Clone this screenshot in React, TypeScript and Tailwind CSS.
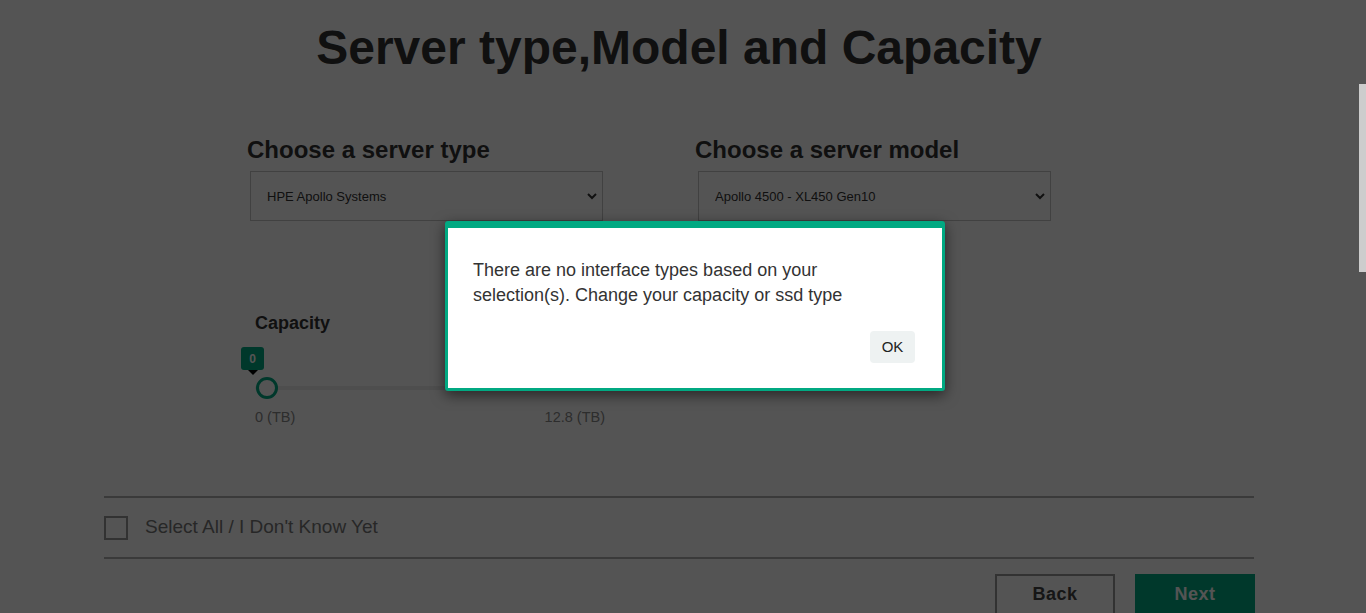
import React from 'react';

function SelectBox({ value }: { value: string }) {
    return (
        <div className="relative ml-[3px] mt-[8px] h-[50px] w-[353px]">
            <select
                defaultValue={value}
                className="h-full w-full appearance-none border border-[#c4c4c4] bg-white pl-[16px] pt-[2px] text-[13px] text-[#333] outline-none"
            >
                <option>{value}</option>
            </select>
            <svg
                className="pointer-events-none absolute right-[6px] top-[22px]"
                width="10"
                height="7"
                viewBox="0 0 10 7"
                fill="none"
            >
                <polyline points="1,1 5,5 9,1" stroke="#333" strokeWidth="2" />
            </svg>
        </div>
    );
}

function CapacitySlider() {
    return (
        <div className="pl-[8px]">
            <div className="text-[18px] font-bold leading-[21px] text-[#333]">Capacity</div>
            <div className="relative mt-[13px] h-[53px] w-[350px]">
                {/* track */}
                <div className="absolute left-0 right-0 top-[39px] h-[4px] rounded-full bg-[#ebebeb]" />
                {/* value tooltip */}
                <div className="absolute left-[-14px] top-0 flex h-[23px] w-[23px] items-center justify-center rounded-[3px] bg-[#01a982] text-[12px] font-bold text-white">
                    0
                </div>
                <div className="absolute left-[-7px] top-[23px] h-0 w-0 border-x-[5px] border-t-[5px] border-x-transparent border-t-black" />
                {/* thumb */}
                <div className="absolute left-[1px] top-[30px] h-[22px] w-[22px] rounded-full border-[3px] border-[#01a982] bg-white" />
            </div>
            <div className="mt-[9px] flex h-[16px] w-[350px] justify-between text-[14.5px] leading-[16px] text-[#888]">
                <span>0 (TB)</span>
                <span>12.8 (TB)</span>
            </div>
        </div>
    );
}

export default function App() {
    return (
        <div className="relative h-[613px] w-[1366px] overflow-hidden bg-white font-['Liberation_Sans',Arial,sans-serif]">
            <div className="w-[1358px]">
                <h1 className="pt-[20px] text-center text-[48px] font-bold leading-[56px] text-[#333]">
                    Server type,Model and Capacity
                </h1>

                <div className="mx-auto w-[1150px]">
                    <div className="mt-[60px] flex pl-[143px]">
                        <div className="w-[448px]">
                            <h2 className="text-[24px] font-bold leading-[27px] text-[#333]">Choose a server type</h2>
                            <SelectBox value="HPE Apollo Systems" />
                        </div>
                        <div className="w-[448px]">
                            <h2 className="text-[24px] font-bold leading-[27px] text-[#333]">Choose a server model</h2>
                            <SelectBox value="Apollo 4500 - XL450 Gen10" />
                        </div>
                    </div>

                    <div className="mt-[92px] pl-[143px]">
                        <CapacitySlider />
                    </div>

                    <div className="mt-[71px] h-[2px] bg-[#b0b0b0]" />
                    <div className="flex h-[59px] items-center gap-[17px]">
                        <div className="h-[24px] w-[24px] border-2 border-[#999]" />
                        <span className="text-[19px] text-[#777]">Select All / I Don't Know Yet</span>
                    </div>
                    <div className="h-[2px] bg-[#b0b0b0]" />

                    <div className="mr-[-1px] mt-[15px] flex justify-end gap-[20px]">
                        <button className="flex h-[50px] w-[120px] items-start justify-center border-2 border-[#999] bg-white pt-[8px] text-[18px] font-bold leading-[20px] tracking-[0.5px] text-[#444]">
                            Back
                        </button>
                        <button className="flex h-[50px] w-[120px] items-start justify-center bg-[#01a982] pt-[10px] text-[18px] font-bold leading-[20px] tracking-[0.5px] text-white">
                            Next
                        </button>
                    </div>
                </div>
            </div>

            {/* dim overlay */}
            <div className="absolute inset-0 bg-[rgba(0,0,0,0.67)]" />

            {/* alert dialog */}
            <div className="absolute left-[445px] top-[221px] w-[500px] rounded-[3px] border-[3px] border-t-[7px] border-[#01a982] bg-white shadow-[0_4px_14px_rgba(0,0,0,0.55)]">
                <div className="pb-[25px] pl-[25px] pr-[27px] pt-[30px]">
                    <p className="text-[18px] leading-[25px] text-[#333]">
                        There are no interface types based on your
                        <br />
                        selection(s). Change your capacity or ssd type
                    </p>
                    <div className="mt-[23px] flex justify-end">
                        <button className="h-[32px] w-[45px] rounded-[4px] bg-[#eef2f2] text-[15px] text-[#222]">OK</button>
                    </div>
                </div>
            </div>

            {/* page scrollbar */}
            <div className="absolute right-0 top-[84px] h-[188px] w-[7px] bg-[#cdcdcd]" />
        </div>
    );
}
